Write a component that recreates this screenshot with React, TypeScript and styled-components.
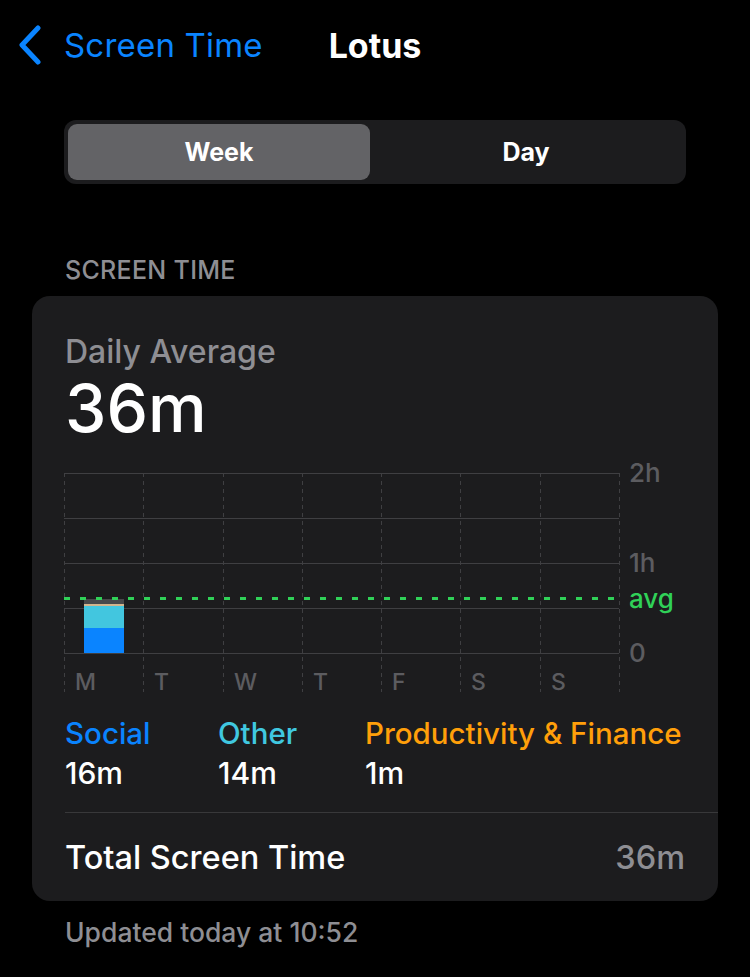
import React from "react";
import styled, { createGlobalStyle } from "styled-components";

const Global = createGlobalStyle`
  html, body { margin: 0; padding: 0; background: #000; }
  body { font-family: Inter, "Noto Sans", sans-serif; -webkit-font-smoothing: antialiased; }
`;

const Page = styled.div`
  width: 750px;
  min-height: 977px;
  background: #000;
  color: #fff;
  display: flex;
  flex-direction: column;
`;

const NavBar = styled.header`
  display: grid;
  grid-template-columns: 1fr auto 1fr;
  align-items: center;
  height: 90px;
  padding: 0 18px;
`;

const BackButton = styled.button`
  display: flex;
  align-items: center;
  gap: 22px;
  background: none;
  border: none;
  padding: 0;
  color: #0a84ff;
  font-family: inherit;
  font-size: 33px;
  font-weight: 400;
  letter-spacing: 0.2px;
  cursor: pointer;
  justify-self: start;
`;

const Title = styled.h1`
  margin: 0;
  font-size: 34px;
  font-weight: 700;
  color: #fff;
`;

const Segmented = styled.div`
  margin: 30px 64px 0;
  height: 64px;
  padding: 4px;
  box-sizing: border-box;
  background: #1c1c1e;
  border-radius: 12px;
  display: grid;
  grid-template-columns: 302px 1fr;
`;

const Segment = styled.div<{ $active?: boolean }>`
  display: flex;
  align-items: center;
  justify-content: center;
  border-radius: 9px;
  background: ${(p) => (p.$active ? "#636366" : "transparent")};
  font-size: 25px;
  font-weight: 700;
  color: #fff;
`;

const SectionLabel = styled.div`
  margin: 74px 65px 0;
  font-size: 25px;
  font-weight: 500;
  color: #8e8e93;
  letter-spacing: 0.3px;
  line-height: 24px;
`;

const Card = styled.section`
  margin: 14px 32px 0;
  background: #1c1c1e;
  border-radius: 18px;
  padding-top: 38px;
  display: flex;
  flex-direction: column;
`;

const CardBody = styled.div`
  padding: 0 33px;
`;

const Caption = styled.div`
  font-size: 32px;
  line-height: 36px;
  font-weight: 500;
  color: #8e8e93;
`;

const BigValue = styled.div`
  margin-top: 6px;
  font-size: 66px;
  line-height: 64px;
  font-weight: 500;
  color: #fff;
`;

const ChartBox = styled.div`
  margin: 10px 0 0 -1px;
  height: 246px;
`;

const Legend = styled.div`
  display: flex;
  margin-top: 18px;
`;

const LegendItem = styled.div<{ $w?: number }>`
  display: flex;
  flex-direction: column;
  flex: ${(p) => (p.$w ? `0 0 ${p.$w}px` : "1 1 auto")};
  white-space: nowrap;
`;

const LegendName = styled.span<{ $color: string }>`
  font-size: 29.5px;
  line-height: 38px;
  font-weight: 500;
  color: ${(p) => p.$color};
`;

const LegendValue = styled.span`
  font-size: 30px;
  line-height: 42px;
  font-weight: 500;
  color: #fff;
`;

const Divider = styled.div`
  margin: 18px 0 0 33px;
  height: 1px;
  background: #38383a;
`;

const TotalRow = styled.div`
  display: flex;
  justify-content: space-between;
  align-items: center;
  height: 88px;
  padding: 0 33px;
  font-size: 32.5px;
  font-weight: 500;
`;

const TotalValue = styled.span`
  color: #8e8e93;
`;

const Footer = styled.div`
  margin: 15px 65px 0;
  font-size: 26.5px;
  font-weight: 500;
  color: #8e8e93;
`;

const gridColor = "#3f3f42";
const axisColor = "#5c5c60";

function Chart() {
  const colW = 555 / 7;
  const top = 23;
  const hLines = [0, 45, 90, 135, 180].map((v) => v + top);
  const days = ["M", "T", "W", "T", "F", "S", "S"];
  return (
    <svg width="626" height="246" viewBox="0 0 626 246">
      {hLines.map((y) => (
        <line key={y} x1={0} x2={555} y1={y + 0.5} y2={y + 0.5} stroke={gridColor} strokeWidth={1} />
      ))}
      {Array.from({ length: 8 }).map((_, i) => {
        const x = Math.round(i * colW) + 0.5;
        return (
          <line key={i} x1={x} x2={x} y1={top} y2={top + 219} stroke={gridColor} strokeWidth={1} strokeDasharray="4 4" />
        );
      })}
      <rect x={20} y={top + 126} width={40} height={5} fill="#48484a" />
      <rect x={20} y={top + 131} width={40} height={2} fill="#d2b48c" />
      <rect x={20} y={top + 133} width={40} height={22} fill="#42c6df" />
      <rect x={20} y={top + 155} width={40} height={25} fill="#0a84ff" />
      <line x1={0} x2={555} y1={top + 125.5} y2={top + 125.5} stroke="#30d158" strokeWidth={3} strokeDasharray="6 10" />
      <g fontFamily="Inter, sans-serif" fontSize="26" fontWeight="500" fill={axisColor}>
        <text x={565} y={top + 9}>2h</text>
        <text x={565} y={top + 99}>1h</text>
        <text x={565} y={top + 189}>0</text>
        <text x={565} y={top + 135} fill="#30d158">avg</text>
      </g>
      <g fontFamily="Inter, sans-serif" fontSize="23" fontWeight="500" fill={axisColor}>
        {days.map((d, i) => (
          <text key={i} x={Math.round(i * colW) + 11} y={top + 217}>{d}</text>
        ))}
      </g>
    </svg>
  );
}

export default function App() {
  return (
    <Page>
      <Global />
      <NavBar>
        <BackButton>
          <svg width="24" height="40" viewBox="0 0 24 40">
            <path d="M20 3 L4 20 L20 37" fill="none" stroke="#0a84ff" strokeWidth="5" strokeLinecap="round" strokeLinejoin="round" />
          </svg>
          Screen Time
        </BackButton>
        <Title>Lotus</Title>
        <div />
      </NavBar>
      <Segmented>
        <Segment $active>Week</Segment>
        <Segment>Day</Segment>
      </Segmented>
      <SectionLabel>SCREEN TIME</SectionLabel>
      <Card>
        <CardBody>
          <Caption>Daily Average</Caption>
          <BigValue>36m</BigValue>
          <ChartBox>
            <Chart />
          </ChartBox>
          <Legend>
            <LegendItem $w={153}>
              <LegendName $color="#0a84ff">Social</LegendName>
              <LegendValue>16m</LegendValue>
            </LegendItem>
            <LegendItem $w={147}>
              <LegendName $color="#40c8e0">Other</LegendName>
              <LegendValue>14m</LegendValue>
            </LegendItem>
            <LegendItem>
              <LegendName $color="#ff9f0a">Productivity &amp; Finance</LegendName>
              <LegendValue>1m</LegendValue>
            </LegendItem>
          </Legend>
        </CardBody>
        <Divider />
        <TotalRow>
          <span>Total Screen Time</span>
          <TotalValue>36m</TotalValue>
        </TotalRow>
      </Card>
      <Footer>Updated today at 10:52</Footer>
    </Page>
  );
}
